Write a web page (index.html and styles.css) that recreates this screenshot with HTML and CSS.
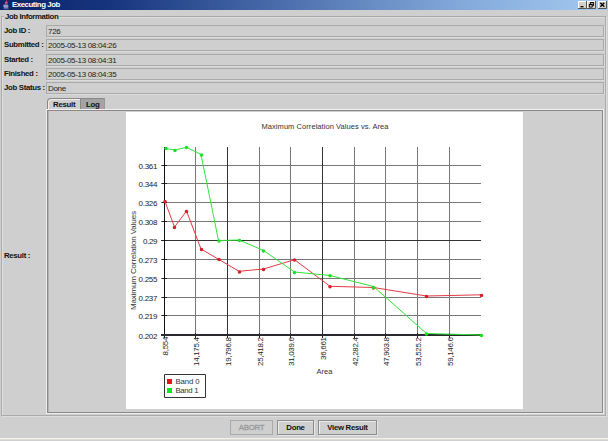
FILE: index.html
```
<!DOCTYPE html>
<html lang="en">
<head>
<meta charset="utf-8">
<title>Executing Job</title>
<link rel="stylesheet" href="styles.css">
</head>
<body>
<div class="window">
  <header class="titlebar">
    <svg class="java" width="8" height="10" viewBox="0 0 8 10"><path d="M4.500 0.500C5 2 2.500 2.500 3.500 4.500M5.500 2C4.500 3 4.500 3.500 5 4.500" fill="none" stroke="#e0526a" stroke-width="1.1"/><path d="M1.500 5h4.500v2.500h-4zM1.500 8.700h5" fill="#9c9cd0" stroke="#8d8fc4" stroke-width=".7"/></svg>
    <h1>Executing Job</h1>
    <div class="controls">
      <svg width="9" height="8" viewBox="0 0 9 8"><path class="face" d="M0 0h9v8H0z"/><path class="lit" d="M.5 7V.5H8"/><path class="dark" d="M8.500 0v7.500H0"/><path d="M2.500 5.700h3" stroke="#000" stroke-width="1.3"/></svg>
      <svg width="9" height="8" viewBox="0 0 9 8"><path class="face" d="M0 0h9v8H0z"/><path class="lit" d="M.5 7V.5H8"/><path class="dark" d="M8.500 0v7.500H0"/><path d="M3.500 3V1.700h3v2.800H5.500M2.300 3.700h3v2.400h-3zM3.200 1.500h3.600M2 3.500h3.600" fill="none" stroke="#000" stroke-width=".9"/></svg>
      <svg class="close" width="9" height="8" viewBox="0 0 9 8"><path class="face" d="M0 0h9v8H0z"/><path class="lit" d="M.5 7V.5H8"/><path class="dark" d="M8.500 0v7.500H0"/><path d="M2.300 1.800l4 4M6.300 1.800l-4 4" stroke="#000" stroke-width="1.3"/></svg>
    </div>
  </header>
  <fieldset class="group">
    <legend>Job Information</legend>
    <div class="row"><label>Job ID :</label><output>726</output></div>
    <div class="row"><label>Submitted :</label><output>2005-05-13 08:04:26</output></div>
    <div class="row"><label>Started :</label><output>2005-05-13 08:04:31</output></div>
    <div class="row"><label>Finished :</label><output>2005-05-13 08:04:35</output></div>
    <div class="row"><label>Job Status :</label><output>Done</output></div>
    <div class="result">
      <label>Result :</label>
      <div class="tabbed">
        <nav class="tabs"><span class="tab active">Result</span><span class="tab">Log</span></nav>
        <div class="panel">
          <svg class="chart" width="397" height="297" viewBox="126 112 397 297">
            <path fill="#fff" d="M126 112h397v297H126z"/>
            <text class="title" x="261.5" y="129" textLength="127">Maximum Correlation Values vs. Area</text>
            <g class="grid">
              <path d="M161 165.500H481M161 183.500H481M161 202.500H481M161 221.500H481M161 259.500H481M161 278.500H481M161 297.500H481M161 315.500H481"/>
              <path d="M195.500 147V338M259.500 147V338M290.500 147V338M354.500 147V338M385.500 147V338M417.500 147V338M449.500 147V338"/>
              <path class="strong" d="M161 240.500H481M227.500 147V338M322.500 147V338"/>
            </g>
            <path class="ticks" d="M162 165.500h5M162 183.500h5M162 202.500h5M162 221.500h5M162 240.500h5M162 259.500h5M162 278.500h5M162 297.500h5M162 315.500h5M195.500 333v5M227.500 333v5M259.500 333v5M290.500 333v5M322.500 333v5M354.500 333v5M385.500 333v5M417.500 333v5M449.500 333v5"/>
            <path class="axis" d="M164.500 147V338"/>
            <path class="base" d="M161 335H481"/>
            <g class="num">
              <text x="138.500" y="168.500" textLength="19">0.361</text>
              <text x="138.500" y="187" textLength="19">0.344</text>
              <text x="138.500" y="206" textLength="19">0.326</text>
              <text x="138.500" y="225" textLength="19">0.308</text>
              <text x="143" y="243.500" textLength="14.500">0.29</text>
              <text x="138.500" y="262.500" textLength="19">0.273</text>
              <text x="138.500" y="281.500" textLength="19">0.255</text>
              <text x="138.500" y="300.500" textLength="19">0.237</text>
              <text x="138.500" y="319" textLength="19">0.219</text>
              <text x="138.500" y="338.500" textLength="19">0.202</text>
            </g>
            <text class="ylabel" transform="translate(136 310) rotate(-90)" textLength="99">Maximum Correlation Values</text>
            <g class="num">
              <text transform="translate(168 355.500) rotate(-90)" textLength="19">8,554</text>
              <text transform="translate(199 366) rotate(-90)" textLength="29">14,175.4</text>
              <text transform="translate(231 366) rotate(-90)" textLength="29">19,796.8</text>
              <text transform="translate(263 366) rotate(-90)" textLength="29">25,418.2</text>
              <text transform="translate(294 366) rotate(-90)" textLength="29">31,039.6</text>
              <text transform="translate(326 360) rotate(-90)" textLength="23">36,661</text>
              <text transform="translate(358 366) rotate(-90)" textLength="29">42,282.4</text>
              <text transform="translate(389 366) rotate(-90)" textLength="29">47,903.8</text>
              <text transform="translate(421 366) rotate(-90)" textLength="29">53,525.2</text>
              <text transform="translate(453 366) rotate(-90)" textLength="29">59,146.6</text>
            </g>
            <text class="title" x="316.500" y="374" textLength="16">Area</text>
            <g class="red">
              <path d="M165 201.500L174.500 227L186.500 211L201 249L219 259.500L239 271.300L263.500 269L294.500 259.700L330 286.300L373.500 287.500L426.500 296L481.500 294.800"/>
              <path class="dots" d="M165 201.500h0M174.500 227.500h0M186.500 211.500h0M201.500 249.500h0M219 259.500h0M239.500 272h0M263.500 269.500h0M294.500 260h0M330 286.800h0M373.500 288h0M426.500 296.500h0M481.500 295.500h0"/>
            </g>
            <g class="green">
              <path d="M165 148.500L175 150L186.500 147.300L201 154.500L218.500 240.500L239 240L263.500 250.500L294.500 272L330 275.500L373.500 286.500L426.500 333.500L481.500 335"/>
              <path class="dots" d="M166 148.500h0M175 150.500h0M186.500 147.500h0M201.500 155h0M219 241h0M239.500 240.500h0M263.500 251h0M294.500 272.500h0M330 275.800h0M373.500 287.500h0M426.500 334h0M481.500 335.500h0"/>
            </g>
            <path class="legend" d="M164.500 374.500h41v23h-41z"/>
            <path fill="#e81018" d="M167 379h5v5h-5z"/>
            <path fill="#0ceb18" d="M167 388h5v5h-5z"/>
            <text class="key" x="175.500" y="384" textLength="24">Band 0</text>
            <text class="key" x="175.500" y="393" textLength="23">Band 1</text>
          </svg>
        </div>
      </div>
    </div>
  </fieldset>
  <footer class="actions">
    <button class="abort" disabled>ABORT</button>
    <button class="done">Done</button>
    <button class="view">View Result</button>
  </footer>
</div>
</body>
</html>
```
FILE: styles.css
```
* { box-sizing: border-box; }
body { margin: 0; background: #cfcfcf; font: bold 7.8px/10px "Liberation Sans", Arial, sans-serif; color: #111; }
.window { width: 608px; height: 441px; display: flex; flex-direction: column; border-bottom: 1px solid #cfcfcf; }
.window::after { content: ""; height: 2px; background: linear-gradient(#f4f2ec 50%, #dedbd3 50%); margin-top: auto; }
.titlebar { height: 10px; display: flex; align-items: center; background: linear-gradient(90deg, #0a246a, #16347e 18%, #82a8da 75%, #a6caf0); padding: 0 1px 0 2px; }
.java { margin-right: 2px; }
h1 { margin: 0; font-size: 7.8px; color: #fff; line-height: 10px; letter-spacing: -.42px; }
.controls { margin-left: auto; display: flex; }
.close { margin-left: 2px; }
.face { fill: #d4d0c8; }
.lit { fill: none; stroke: #fff; }
.dark { fill: none; stroke: #55534f; }
.group { position: relative; width: 605px; height: 400px; margin: 6px 0 0 1px; padding: 8px 1px 0 2px; border: 1px solid #aaa; box-shadow: 1px 1px #dedede, inset 1px 1px #dedede; min-width: 0; display: flex; flex-direction: column; gap: 2.25px; }
legend { position: absolute; left: 2px; top: -5px; padding: 0 1px; background: #cfcfcf; line-height: 10px; letter-spacing: -.37px; }
.row { display: flex; align-items: center; height: 12px; flex: none; }
label { width: 42px; flex: none; white-space: nowrap; letter-spacing: -.31px; }
output { flex: 1; height: 12px; border: 1px solid #aaa; box-shadow: 1px 1px #dadada; padding-left: 1px; font-weight: normal; font-size: 8px; line-height: 11px; color: #222; letter-spacing: -.31px; }
.result { display: flex; align-items: center; height: 316px; margin-top: 2px; }
.tabbed { width: 559px; height: 316px; display: flex; flex-direction: column; }
.tabs { display: flex; height: 11px; padding-left: 1px; }
.tab { width: 24px; padding-left: 5px; background: #a4a4a4; border-top: 1px solid #888; border-right: 1px solid #999; line-height: 11px; letter-spacing: -.25px; }
.tab.active { width: 34px; background: #cfcfcf; border: 1px solid #888; border-bottom: 0; border-top-left-radius: 4px; box-shadow: inset 1px 1px #eee; }
.panel { flex: 1; border: 1px solid #eee; border-top-color: #f2f2f2; box-shadow: inset 1px 1px #888, inset -1px -1px #888, inset 2px 0 #b4b4b4; padding: 2px 0 0 79px; }
.chart { display: block; }
.chart text { font-family: "Liberation Sans", Arial, sans-serif; font-weight: normal; fill: #333; }
.chart .title { font-size: 7.5px; }
.chart .num text { font-size: 8px; fill: #222; }
.chart .ylabel { font-size: 8px; }
.chart .key { font-size: 7.8px; }
.grid path { stroke: #777; fill: none; }
.grid .strong { stroke: #333; }
.ticks { stroke: #222; }
.axis { stroke: #111; }
.base { stroke: #2b292d; stroke-width: 2; }
.red path, .green path { fill: none; }
.red path { stroke: #e23a42; }
.green path { stroke: #2fe636; }
.red .dots, .green .dots { stroke-width: 3.6; stroke-linecap: round; }
.red .dots { stroke: #dc1c28; }
.green .dots { stroke: #1be126; }
.legend { fill: #fff; stroke: #333; }
.actions { display: flex; gap: 4px; padding: 4px 0 0 230px; height: 20px; }
button { height: 15px; padding: 0; border: 1px solid #8c8c8c; background: #cfcfcf; box-shadow: inset 1px 1px #eee, 1px 1px #e6e6e6; font: bold 7.8px/12px "Liberation Sans", Arial, sans-serif; letter-spacing: -.3px; color: #111; }
.abort { width: 43px; color: #999; border-color: #aaa; box-shadow: none; font-weight: normal; letter-spacing: -.25px; -webkit-text-stroke: .3px #999; }
.done { width: 37px; }
.view { width: 59px; }
```
